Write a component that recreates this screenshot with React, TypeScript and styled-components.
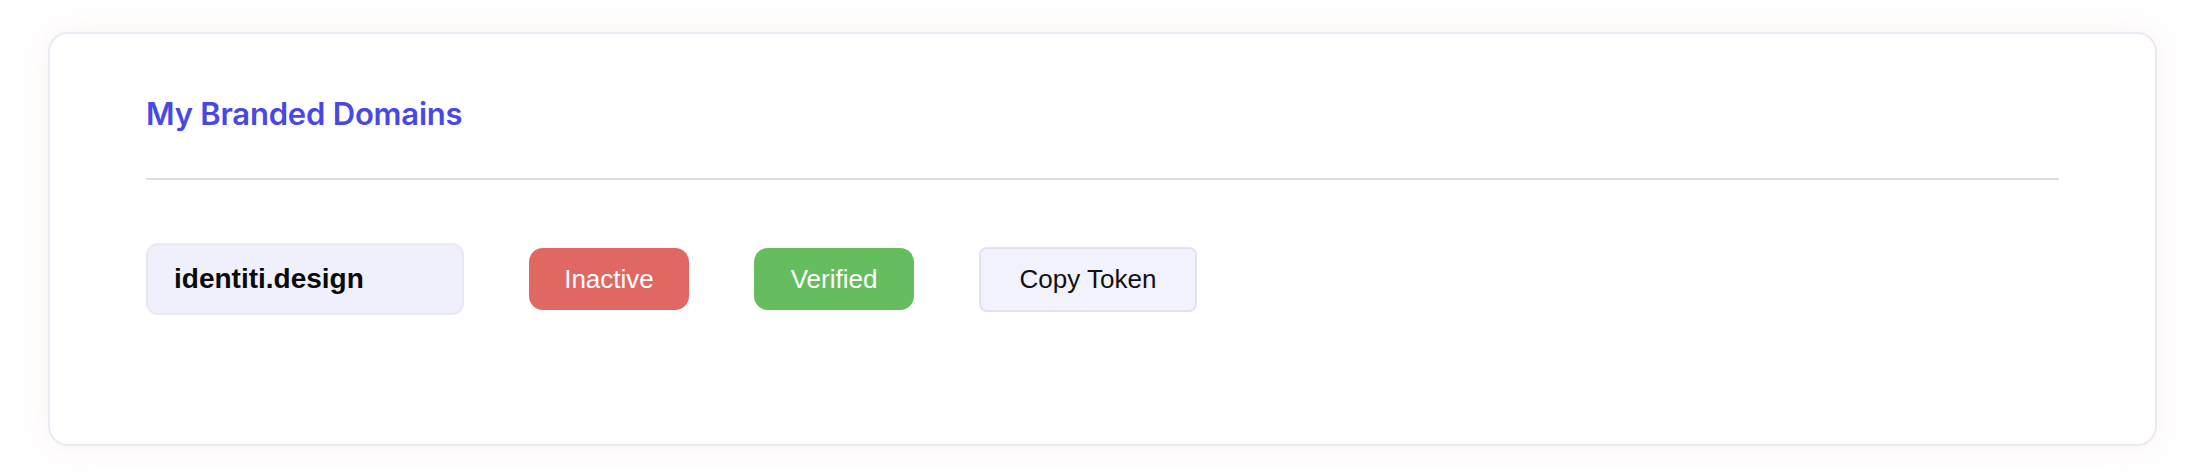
import React from "react";
import styled, { createGlobalStyle } from "styled-components";

const GlobalStyle = createGlobalStyle`
  body {
    margin: 0;
    background: #ffffff;
    font-family: "Liberation Sans", Arial, sans-serif;
  }
`;

const Page = styled.div`
  padding: 32px 43px 31px 48px;
`;

const Card = styled.section`
  background: #ffffff;
  border: 2px solid #ebe9f3;
  border-radius: 20px;
  box-shadow: 0 0 28px 6px rgba(248, 228, 228, 0.35);
  padding: 61px 96px 129px 96px;
`;

const Title = styled.h2`
  margin: 0;
  font-family: Inter, "Liberation Sans", sans-serif;
  font-size: 31px;
  line-height: 38px;
  font-weight: 600;
  letter-spacing: -0.2px;
  color: #4848e4;
`;

const Divider = styled.hr`
  border: none;
  height: 2px;
  background: #dedede;
  margin: 45px 0 63px 0;
`;

const Row = styled.div`
  display: flex;
  align-items: center;
  gap: 65px;
`;

const DomainBox = styled.div`
  width: 318px;
  height: 72px;
  box-sizing: border-box;
  display: flex;
  align-items: center;
  padding-left: 26px;
  background: #f0f0fc;
  border: 2px solid #e8e8f6;
  border-radius: 12px;
  font-family: "Liberation Sans", Arial, sans-serif;
  font-weight: 700;
  font-size: 28px;
  color: #0a0a0a;
`;

const Badge = styled.span<{ $bg: string }>`
  display: inline-flex;
  align-items: center;
  justify-content: center;
  height: 62px;
  min-width: 160px;
  padding: 0 34px;
  box-sizing: border-box;
  border-radius: 14px;
  background: ${(p) => p.$bg};
  color: #ffffff;
  font-size: 26px;
`;

const CopyButton = styled.button`
  height: 65px;
  width: 218px;
  box-sizing: border-box;
  background: #f2f2fc;
  border: 2px solid #e2e2f5;
  border-radius: 8px;
  font-family: "Liberation Sans", Arial, sans-serif;
  font-size: 26px;
  color: #111111;
  cursor: pointer;
`;

export default function App() {
  return (
    <Page>
      <GlobalStyle />
      <Card>
        <Title>My Branded Domains</Title>
        <Divider />
        <Row>
          <DomainBox>identiti.design</DomainBox>
          <Badge $bg="#df6863">Inactive</Badge>
          <Badge $bg="#66bd5f">Verified</Badge>
          <CopyButton>Copy Token</CopyButton>
        </Row>
      </Card>
    </Page>
  );
}
